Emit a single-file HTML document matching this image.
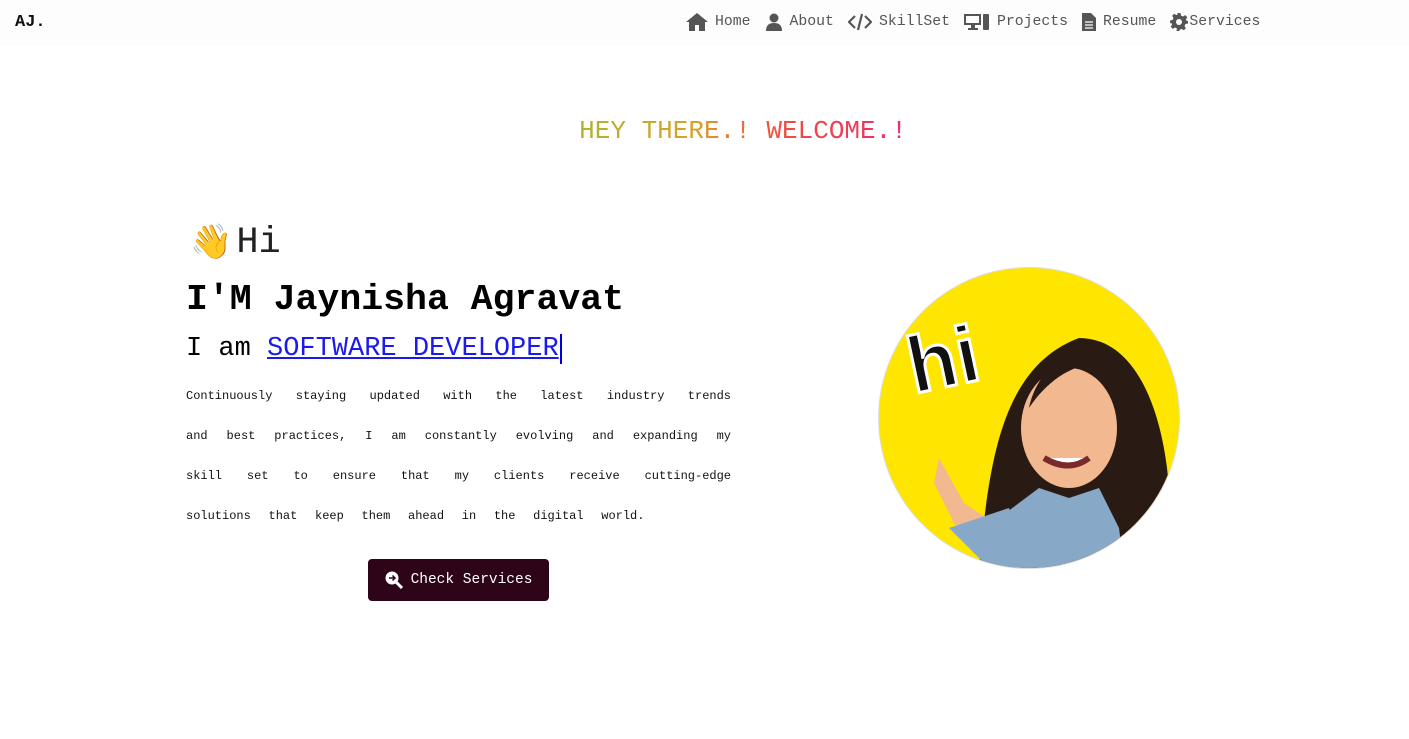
<!DOCTYPE html>
<html><head><style>
body{margin:0;width:1409px;height:739px;background:#fff;font-family:"Liberation Mono",monospace;overflow:hidden;position:relative}
.nav{position:absolute;top:0;left:0;width:1409px;height:46px;background:#fdfdfd}
.logo{position:absolute;left:15px;top:13px;font-weight:bold;font-size:17px;color:#111}
.links{position:absolute;top:13px;left:686px;font-size:14.8px;color:#555;display:flex;align-items:center;white-space:nowrap}
.links span{display:flex;align-items:center;margin-right:14px}
.links svg{margin-right:7px;fill:#555}
.hey{position:absolute;top:116px;left:0;width:1486px;text-align:center;font-size:26px}
.hey span{background:linear-gradient(90deg,#afb52c 0%,#d9a02a 35%,#f05040 60%,#ee2a6a 100%);-webkit-background-clip:text;color:transparent}
.hi{position:absolute;left:190px;top:222px;font-size:37px;color:#222;display:flex;align-items:center}
.name{position:absolute;left:186px;top:279px;font-size:36.5px;font-weight:bold;color:#000}
.iam{position:absolute;left:186px;top:334px;font-size:27px;color:#000}
.iam a{color:#1a1aee;text-decoration:underline;border-right:2px solid #0000dd;padding-right:1px}
.para{position:absolute;left:186px;top:376px;width:545px;font-size:12px;line-height:40px;color:#111}
.para div{text-align:justify;text-align-last:justify}
.para div.l{text-align-last:auto;word-spacing:10.5px}
.btn{position:absolute;left:368px;top:559px;width:181px;height:42px;background:#2e0418;border-radius:4px;color:#fff;font-size:14.5px;display:flex;align-items:center;justify-content:center}
.circ{position:absolute;left:879px;top:268px;width:300px;height:300px;border-radius:50%;background:#ffe600;box-shadow:0 0 0 1px #ddd;overflow:hidden}
</style></head><body>
<div class="nav">
<div class="logo">AJ.</div>
<div class="links">
<span><svg width="22" height="18" viewBox="0 0 22 18"><path d="M11 0L0 9h3v9h6v-6h4v6h6V9h3z"/></svg>Home</span>
<span><svg width="18" height="18" viewBox="0 0 18 18"><circle cx="9" cy="5" r="4.5"/><path d="M1 18c0-6 3-8 8-8s8 2 8 8z"/></svg>About</span>
<span><svg width="24" height="18" viewBox="0 0 24 18"><path d="M7 3L1 9l6 6M17 3l6 6-6 6M14 1l-4 16" stroke="#555" stroke-width="2.2" fill="none"/></svg>SkillSet</span>
<span><svg width="26" height="18" viewBox="0 0 26 18"><path d="M0 1h17v11H11v3h3v2H4v-2h3v-3H0zM2 3v7h13V3z"/><rect x="19" y="1" width="6" height="16" rx="1"/></svg>Projects</span>
<span><svg width="14" height="18" viewBox="0 0 14 18"><path d="M0 0h9l5 5v13H0z"/><path d="M3 9h8M3 12h8M3 15h8" stroke="#fff" stroke-width="1.3"/></svg>Resume</span>
<span style="margin:0"><svg width="18" height="18" viewBox="0 0 18 18" style="margin-right:1px"><path d="M7.5 0h3l.5 2.5 2 1 2.2-1.4 2.1 2.1-1.4 2.2 1 2L18 7.5v3l-2.5.5-1 2 1.4 2.2-2.1 2.1-2.2-1.4-2 1-.5 2.5h-3L7 15.5l-2-1-2.2 1.4-2.1-2.1L2.1 11.6l-1-2L0 10.5v-3l2.5-.5 1-2L2.1 2.8 4.2.7 6.4 2.1l1-.5z"/><circle cx="9" cy="9" r="3" fill="#fff"/></svg>Services</span>
</div></div>
<div class="hey"><span>HEY THERE.! WELCOME.!</span></div>
<div class="hi"><span style="font-size:34px;margin-right:4px">👋</span><span>Hi</span></div>
<div class="name">I'M Jaynisha Agravat</div>
<div class="iam">I am <a>SOFTWARE DEVELOPER</a></div>
<div class="para">
<div>Continuously staying updated with the latest industry trends</div>
<div>and best practices, I am constantly evolving and expanding my</div>
<div>skill set to ensure that my clients receive cutting-edge</div>
<div class="l">solutions that keep them ahead in the digital world.</div>
</div>
<div class="btn"><svg width="18" height="18" viewBox="0 0 18 18" style="margin-right:8px"><circle cx="7" cy="7" r="6.5" fill="#fff"/><path d="M11 11l6 6" stroke="#fff" stroke-width="3"/><path d="M4 7h6M7.5 4.5L10 7 7.5 9.5" stroke="#2e0418" stroke-width="1.5" fill="none"/></svg>Check Services</div>
<div class="circ">
<svg width="300" height="300" viewBox="0 0 300 300">
<text x="30" y="120" font-family="Liberation Sans,sans-serif" font-weight="bold" font-size="80" fill="#111" stroke="#fff" stroke-width="3" transform="rotate(-12 60 100)">hi</text>
<path d="M100 300C110 200 120 100 200 70c60 0 85 80 90 150 5 50-10 70-30 80z" fill="#2a1a14"/>
<ellipse cx="190" cy="160" rx="48" ry="60" fill="#f2b890"/>
<path d="M150 140c10-50 60-70 90-40-20-10-60-5-90 40z" fill="#2a1a14"/>
<path d="M165 190q25 15 45 0" stroke="#7a2a2a" stroke-width="6" fill="#fff"/>
<path d="M110 300l10-50 40-30 30 10 30-10 20 40 5 40z" fill="#88a8c8"/>
<path d="M60 190l25 45 30 20 -10 30-30-30-20-40z" fill="#f2b890"/>
<path d="M70 260l40 40h40l-20-60z" fill="#88a8c8"/>
</svg>
</div>
</body></html>
